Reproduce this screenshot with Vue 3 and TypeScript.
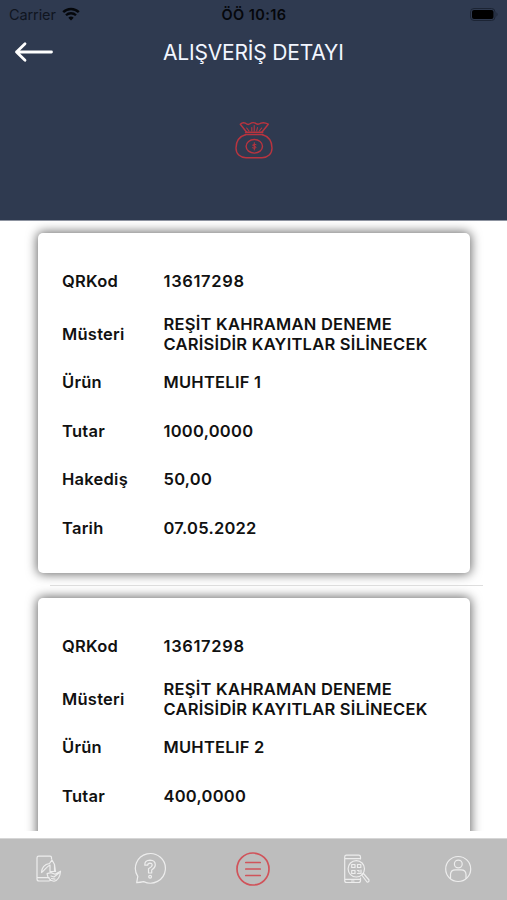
<script setup lang="ts">
interface Field {
  label: string
  value: string
}

const customer = 'REŞİT KAHRAMAN DENEME\nCARİSİDİR KAYITLAR SİLİNECEK'

const purchases: Field[][] = [
  [
    { label: 'QRKod', value: '13617298' },
    { label: 'Müsteri', value: customer },
    { label: 'Ürün', value: 'MUHTELIF 1' },
    { label: 'Tutar', value: '1000,0000' },
    { label: 'Hakediş', value: '50,00' },
    { label: 'Tarih', value: '07.05.2022' },
  ],
  [
    { label: 'QRKod', value: '13617298' },
    { label: 'Müsteri', value: customer },
    { label: 'Ürün', value: 'MUHTELIF 2' },
    { label: 'Tutar', value: '400,0000' },
  ],
]
</script>

<template>
  <div class="screen">
    <header class="header">
      <div class="status">
        <div class="carrier">
          <span>Carrier</span>
          <svg width="18" height="14" viewBox="0 0 18 14">
            <path d="M1.2 5.2a11.2 11.2 0 0 1 15.6 0" fill="none" stroke="#05070b" stroke-width="2.5" />
            <path d="M4 8.3a7.1 7.1 0 0 1 10 0" fill="none" stroke="#05070b" stroke-width="2.3" />
            <path d="M6.3 10.7a3.9 3.9 0 0 1 5.4 0L9 13.6z" fill="#05070b" />
          </svg>
        </div>
        <span class="clock">ÖÖ 10:16</span>
        <svg class="battery" width="29" height="13" viewBox="0 0 29 13">
          <rect x="0.5" y="0.5" width="24.5" height="12" rx="3.5" fill="none" stroke="#1c2434" />
          <rect x="2" y="2" width="21.5" height="9" rx="2" fill="#000" />
          <path d="M26.5 4.3q2 2.2 0 4.4z" fill="#1c2434" />
        </svg>
      </div>
      <div class="titlebar">
        <svg class="back" width="40" height="22" viewBox="0 0 40 22">
          <path d="M11 2.7L2.5 11L11 19.3M2.5 11H37.5" fill="none" stroke="#fff" stroke-width="2.8" stroke-linecap="round" stroke-linejoin="round" />
        </svg>
        <h1>ALIŞVERİŞ DETAYI</h1>
      </div>
      <svg class="bag" width="40" height="40" viewBox="0 0 40 40" fill="none" stroke="#b9343f" stroke-width="1.4" stroke-linejoin="round" stroke-linecap="round">
        <path d="M12.5 12L6.3 4.2Q8.5 2 11.5 3.2Q14 5.3 16 3.8Q19 1.6 22 3.6Q24 5 27 3.2Q30 2 34.3 4.2L28 12" />
        <path d="M11.5 12.2H28.8M11.5 14.5H28.8" />
        <path d="M15 11L12.7 8M17.8 11V7.5M20.2 11V5.5M22.7 11L23.5 7.5M25.3 11L27.7 8" stroke-width="1.1" />
        <path d="M12 14.5C5 16.5 2 22 2 28C2 34 6 37.7 12 37.7H28C34 37.7 38 34 38 28C38 22 35 16.5 28 14.5" />
        <ellipse cx="20.3" cy="26.3" rx="8.2" ry="6.8" />
        <path d="M20.3 22.7V30M22 24.7Q18.5 23.7 18.7 25.4Q22.4 26.4 22.1 27.6Q21 29 18.5 27.8" stroke-width="1" />
      </svg>
    </header>

    <main class="list">
      <template v-for="(fields, index) in purchases" :key="index">
        <hr v-if="index > 0" class="divider">
        <article class="card">
          <dl v-for="field in fields" :key="field.label" class="row">
            <dt>{{ field.label }}</dt>
            <dd>{{ field.value }}</dd>
          </dl>
        </article>
      </template>
    </main>

    <nav class="tabs">
      <svg viewBox="0 0 34 34" class="tab">
        <path d="M20.5 7V5.5Q20.5 4.2 19 4.2H7.7Q6 4.2 6 6V27Q6 29 8 29H18Q19.5 29 19.5 27.5M6 25.7H18" />
        <path d="M10.5 20.5C10.8 15 14 12.2 18.5 11.5L21 8L23.5 12.5V19.5H19V13C15 15 14 18 10.5 20.5zM23.5 12.5L24.5 19.5" />
        <path d="M16 21.7L20 20.6L24 22.2L29.5 19.2Q29 27.5 23 29.3L19.5 28.2L17 25zM20 24L23 25L28 21M20.5 26.5L24 27.2" />
      </svg>
      <svg viewBox="0 0 34 34" class="tab">
        <path d="M3.7 30.7L4.8 24.4A15 14.8 0 1 1 10.7 29.6Q7 30.3 3.7 30.7z" />
        <path d="M11.8 13.2Q11.5 8.3 17 8.2Q22.3 8.3 22.3 13Q22.2 15.8 18.7 18V21H15.5V16.7Q19.3 14.8 19.2 12.9Q19 11.2 17 11.2Q14.7 11.3 14.7 13.2z" />
        <circle cx="17.1" cy="24.8" r="1.4" />
      </svg>
      <svg viewBox="0 0 34 34" class="tab active">
        <circle cx="17" cy="17" r="16" />
        <path d="M9.8 10.5H24.2M9.8 17H24.2M9.8 23.5H24.2" />
      </svg>
      <svg viewBox="0 0 34 34" class="tab">
        <path d="M21.5 7V5Q21.5 3.2 19.7 3.2H7.5Q5.7 3.2 5.7 5V28.5Q5.7 30.5 7.5 30.5H19.7Q21.5 30.5 21.5 28.5V26M5.7 6.7H21.5M5.7 27.3H21.5M12.5 29H15" />
        <circle cx="17.3" cy="16.8" r="8.2" />
        <path d="M12.7 12.5H16V15.5H12.7zM18.5 12.5H21.8V15.5H18.5zM12.7 18.5H16V21.5H12.7zM18.5 18.5H20V20M22 18V21.5H18.5" />
        <path d="M22.7 23L24.5 21.5L30 28Q30.3 30.3 28 30z" />
      </svg>
      <svg viewBox="0 0 34 34" class="tab">
        <circle cx="17.2" cy="17" r="12.5" />
        <circle cx="17.3" cy="12" r="3.9" />
        <path d="M9.5 26.3V22.5Q9.7 17.8 14.5 17.8H20Q24.8 17.8 25 22.5V26.3" />
      </svg>
    </nav>
  </div>
</template>

<style>
body {
  margin: 0;
  background: #fff;
}
</style>

<style scoped>
.screen {
  display: flex;
  flex-direction: column;
  width: 507px;
  height: 900px;
  overflow: hidden;
  background: #fff;
  color: #111;
  font-family: Inter, "Liberation Sans", sans-serif;
}

.header {
  flex: none;
  box-sizing: border-box;
  display: flex;
  flex-direction: column;
  height: 221px;
  background: #2f3a50;
  border-bottom: 1px solid #8d93a0;
}

.status {
  display: grid;
  grid-template-columns: 1fr auto 1fr;
  align-items: center;
  height: 28px;
  padding: 0 8px 0 9px;
  color: #05070b;
  font-size: 14.5px;
}

.carrier {
  display: flex;
  align-items: center;
  gap: 6px;
  color: #10151f;
  letter-spacing: -0.1px;
}

.clock {
  font-weight: 600;
  letter-spacing: 0.4px;
}

.battery {
  justify-self: end;
}

.titlebar {
  display: grid;
  grid-template-columns: 149px 1fr;
  align-items: center;
  height: 48px;
  padding-left: 14px;
}

h1 {
  margin: 1px 0 0;
  color: #f2f6ff;
  font-size: 21px;
  font-weight: 400;
  line-height: 26px;
  letter-spacing: -0.18px;
  white-space: nowrap;
}

.bag {
  align-self: center;
  margin-top: 44px;
}

.list {
  flex: none;
  box-sizing: border-box;
  height: 610px;
  padding: 12px 24px 0 38px;
  overflow: hidden;
}

.card {
  box-sizing: border-box;
  width: 432px;
  height: 340px;
  padding: 38px 24px 0;
  border-radius: 5px;
  background: #fff;
  box-shadow: 0 0 11px 1px rgba(0, 0, 0, 0.6);
}

.divider {
  height: 1px;
  margin: 12px 0 12px 12px;
  border: 0;
  background: #dedede;
}

.row {
  display: grid;
  grid-template-columns: 101.5px 1fr;
  align-items: center;
  margin: 0 0 28.5px;
  font-size: 16.5px;
  font-weight: 600;
  line-height: 20px;
  letter-spacing: 0.25px;
}

.row:first-child {
  margin-bottom: 23px;
}

.row:nth-child(2) {
  margin-bottom: 18px;
}

dd {
  margin: 0;
  white-space: pre;
}

.row:first-child dd {
  letter-spacing: 0.65px;
}

.tabs {
  display: grid;
  grid-template-columns: repeat(5, 102.7px);
  justify-content: center;
  justify-items: center;
  box-sizing: border-box;
  height: 62px;
  margin-top: auto;
  padding: 13px 1px 0 0;
  border-top: 1px solid #d6d6d6;
  background: #bdbdbd;
}

.tab {
  width: 34px;
  height: 34px;
  fill: none;
  stroke: #ededed;
  stroke-width: 1.2;
  stroke-linecap: round;
  stroke-linejoin: round;
}

.active {
  stroke: #d0535a;
  stroke-width: 1.7;
}
</style>
